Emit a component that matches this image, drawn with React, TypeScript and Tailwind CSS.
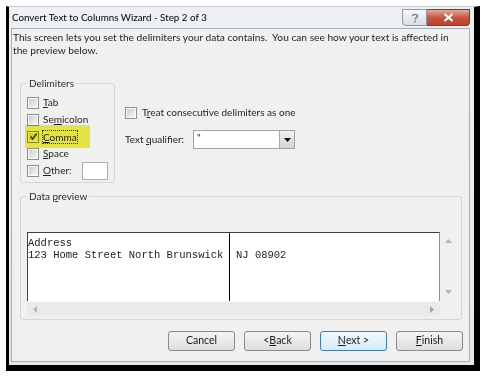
import type { ReactNode } from 'react';

function Box({ checked }: { checked?: boolean }) {
  return (
    <span className="w-[12px] h-[12px] border border-[#8e8f8f] bg-white/60 p-[1px] flex shrink-0">
      <span className="flex-1 bg-gradient-to-br from-[#cfcfcf] to-[#f4f4f4] flex items-center justify-center">
        {checked && (
          <svg width="9" height="9" viewBox="0 0 9 9">
            <path d="M1.5 4.5 L3.6 7 L7.8 1.5" fill="none" stroke="#3b3b3b" strokeWidth="1.6" />
          </svg>
        )}
      </span>
    </span>
  );
}

function Key({ children }: { children: ReactNode }) {
  return <span className="underline underline-offset-[1px]">{children}</span>;
}

function Btn({ children, primary }: { children: ReactNode; primary?: boolean }) {
  return (
    <div
      className={
        'w-[67px] h-[20px] rounded-[3px] border flex items-center justify-center text-[10.5px] text-[#1a1a1a] ' +
        (primary
          ? 'border-[#3c7fb1] bg-gradient-to-b from-[#f0f8fd] to-[#d6ebf9]'
          : 'border-[#8a8a8a] bg-gradient-to-b from-[#f4f4f4] to-[#dedede]')
      }
    >
      {children}
    </div>
  );
}

export default function App() {
  return (
    <div className="w-[487px] h-[380px] bg-white pl-[6px] pt-[6px] font-['Lato',sans-serif] text-[10px] text-[#1e1e1e]">
      <div className="w-[474px] h-[365px] border-l-[3px] border-r-[6px] border-b-[6px] border-black border-t border-t-[#c8ccd2] bg-gradient-to-b from-[#eef1f4] to-[#e4e8ec] flex flex-col">
        {/* Title bar */}
        <div className="h-[21px] flex items-start pl-[3px] pr-[4px]">
          <span className="mt-[4px] text-[9.8px] leading-[13px] text-black">Convert Text to Columns Wizard - Step 2 of 3</span>
          <div className="ml-auto mt-[2px] flex">
            <div className="w-[25px] h-[17px] rounded-bl-[4px] border border-[#8d98a6] bg-gradient-to-b from-[#f6f7f9] to-[#d9dee4] flex items-center justify-center">
              <svg width="8" height="10" viewBox="0 0 8 10">
                <path d="M1.5 3 C1.5 0.8 6.5 0.8 6.5 3 C6.5 4.6 4 4.6 4 6.6" fill="none" stroke="#6d7886" strokeWidth="1.4" />
                <rect x="3.2" y="7.8" width="1.6" height="1.6" fill="#6d7886" />
              </svg>
            </div>
            <div className="w-[43px] h-[17px] rounded-br-[4px] border border-l-0 border-[#7d3a30] bg-gradient-to-b from-[#e7a898] via-[#c9553f] to-[#b8432e] flex items-center justify-center">
              <svg width="11" height="9" viewBox="0 0 11 9">
                <path d="M1.5 1 L9.5 8 M9.5 1 L1.5 8" stroke="#ffffff" strokeWidth="2.2" />
              </svg>
            </div>
          </div>
        </div>

        {/* Client area */}
        <div className="flex-1 ml-[2px] mr-[4px] mb-[3px] border border-[#a7aeb6] bg-[#f0f0f0] flex flex-col">
          <p className="pl-[1px] pr-[10px] pt-[2px] leading-[13px] text-[10.2px]">
            This screen lets you set the delimiters your data contains.&nbsp; You can see how your text is affected in the preview below.
          </p>

          <div className="mt-[20px] flex">
            <fieldset className="ml-[8px] w-[95px] min-w-0 h-[106px] border border-[#d5d5d5] rounded-[3px] px-[6px]">
              <legend className="px-[2px] ml-[0px] leading-[13px] text-[#2a2a2a]">Delimiters</legend>
              <div className="pt-[4px] flex flex-col">
                <div className="h-[17px] flex items-center gap-[4px]">
                  <Box />
                  <span><Key>T</Key>ab</span>
                </div>
                <div className="h-[17px] flex items-center gap-[4px]">
                  <Box />
                  <span>Se<Key>m</Key>icolon</span>
                </div>
                <div className="relative h-[17px] flex items-center gap-[3px]">
                  <Box checked />
                  <span className="border border-dotted border-[#333] px-[0px] leading-[12px]"><Key>C</Key>omma</span>
                  <div className="absolute -left-[2px] -top-[3px] w-[65px] h-[23px] bg-[#f2f24a] mix-blend-multiply" />
                </div>
                <div className="h-[17px] flex items-center gap-[4px]">
                  <Box />
                  <span><Key>S</Key>pace</span>
                </div>
                <div className="h-[17px] flex items-center gap-[4px]">
                  <Box />
                  <span><Key>O</Key>ther:</span>
                  <div className="ml-[6px] w-[27px] h-[18px] border border-[#abadb3] bg-white" />
                </div>
              </div>
            </fieldset>

            <div className="ml-[10px] pt-[29px] flex flex-col">
              <div className="h-[13px] flex items-center gap-[5px]">
                <Box />
                <span>T<Key>r</Key>eat consecutive delimiters as one</span>
              </div>
              <div className="mt-[11px] flex items-center">
                <span className="w-[68px] whitespace-nowrap">Text <Key>q</Key>ualifier:</span>
                <div className="w-[102px] h-[19px] border border-[#9da2a8] bg-white flex">
                  <span className="flex-1 pl-[3px] leading-[12px] text-[10px]">"</span>
                  <div className="w-[15px] h-full border-l border-[#a8a8a8] bg-gradient-to-b from-[#f2f2f2] to-[#d4d4d4] flex items-center justify-center">
                    <svg width="7" height="4" viewBox="0 0 7 4">
                      <path d="M0 0 H7 L3.5 4 Z" fill="#111" />
                    </svg>
                  </div>
                </div>
              </div>
            </div>
          </div>

          <fieldset className="mt-[7px] ml-[8px] w-[442px] border border-[#d5d5d5] rounded-[3px] pl-[6px] pr-[4px] pb-[3px]">
            <legend className="px-[2px] leading-[13px] text-[#2a2a2a]">Data <Key>p</Key>review</legend>
            <div className="mt-[29px] grid grid-cols-[413px_17px] grid-rows-[69px_15px]">
              <div className="border-t border-l border-[#404040] border-r border-r-[#909090] bg-white flex font-['Liberation_Mono',monospace] text-[10.5px] leading-[12px] text-[#222]">
                <div className="w-[202px] border-r border-black pt-[4px] whitespace-pre">
                  {'Address\n123 Home Street North Brunswick'}
                </div>
                <div className="pt-[16px] pl-[6px] whitespace-pre">NJ 08902</div>
              </div>
              <div className="bg-[#f0f0f0] flex flex-col items-center justify-between py-[7px]">
                <svg width="7" height="4" viewBox="0 0 7 4"><path d="M0 4 H7 L3.5 0 Z" fill="#b5b5b5" /></svg>
                <svg width="7" height="4" viewBox="0 0 7 4"><path d="M0 0 H7 L3.5 4 Z" fill="#b5b5b5" /></svg>
              </div>
              <div className="bg-[#eaeaea] border-t border-[#f8f8f8] flex items-center justify-between px-[6px]">
                <svg width="4" height="7" viewBox="0 0 4 7"><path d="M4 0 V7 L0 3.5 Z" fill="#b5b5b5" /></svg>
                <svg width="4" height="7" viewBox="0 0 4 7"><path d="M0 0 V7 L4 3.5 Z" fill="#a5a5a5" /></svg>
              </div>
              <div className="bg-[#f0f0f0]" />
            </div>
          </fieldset>

          <div className="mt-[11px] pr-[6px] flex justify-end gap-[9px]">
            <Btn>Cancel</Btn>
            <Btn>&lt; <Key>B</Key>ack</Btn>
            <Btn primary><Key>N</Key>ext &gt;</Btn>
            <Btn><Key>F</Key>inish</Btn>
          </div>
        </div>
      </div>
    </div>
  );
}
